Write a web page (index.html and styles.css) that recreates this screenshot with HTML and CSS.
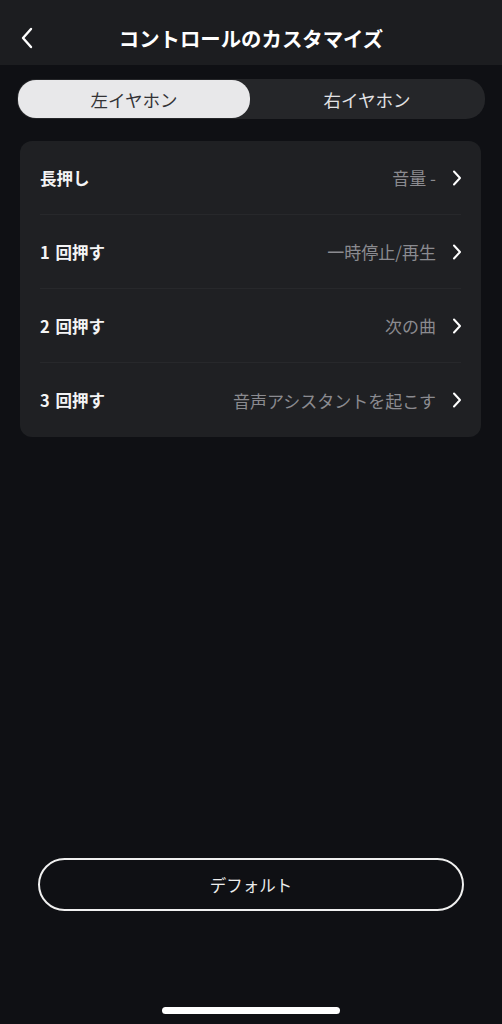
FILE: index.html
```html
<!DOCTYPE html>
<html lang="ja">
<head>
    <meta charset="UTF-8">
    <meta name="viewport" content="width=device-width, initial-scale=1.0">
    <title>コントロールのカスタマイズ</title>
    <link rel="stylesheet" href="styles.css">
</head>
<body>
    <div class="screen">
        <div class="header">
            <a href="#" class="back-btn">
                <svg width="14" height="22" viewBox="0 0 14 22">
                    <path d="M11 2 L3 11 L11 20" fill="none" stroke="#fff" stroke-width="2.4" stroke-linecap="round" stroke-linejoin="round"/>
                </svg>
            </a>
            <div class="header-title">コントロールのカスタマイズ</div>
        </div>

        <div class="segment">
            <div class="segment-item active">左イヤホン</div>
            <div class="segment-item">右イヤホン</div>
        </div>

        <div class="settings-card">
            <div class="setting-row">
                <span class="setting-label">長押し</span>
                <span class="setting-value">音量 -</span>
                <svg class="chevron" width="10" height="16" viewBox="0 0 10 16">
                    <path d="M2 1.5 L8 8 L2 14.5" fill="none" stroke="#fff" stroke-width="2" stroke-linecap="round" stroke-linejoin="round"/>
                </svg>
            </div>
            <div class="setting-row">
                <span class="setting-label">1 回押す</span>
                <span class="setting-value">一時停止/再生</span>
                <svg class="chevron" width="10" height="16" viewBox="0 0 10 16">
                    <path d="M2 1.5 L8 8 L2 14.5" fill="none" stroke="#fff" stroke-width="2" stroke-linecap="round" stroke-linejoin="round"/>
                </svg>
            </div>
            <div class="setting-row">
                <span class="setting-label">2 回押す</span>
                <span class="setting-value">次の曲</span>
                <svg class="chevron" width="10" height="16" viewBox="0 0 10 16">
                    <path d="M2 1.5 L8 8 L2 14.5" fill="none" stroke="#fff" stroke-width="2" stroke-linecap="round" stroke-linejoin="round"/>
                </svg>
            </div>
            <div class="setting-row">
                <span class="setting-label">3 回押す</span>
                <span class="setting-value">音声アシスタントを起こす</span>
                <svg class="chevron" width="10" height="16" viewBox="0 0 10 16">
                    <path d="M2 1.5 L8 8 L2 14.5" fill="none" stroke="#fff" stroke-width="2" stroke-linecap="round" stroke-linejoin="round"/>
                </svg>
            </div>
        </div>

        <div class="spacer"></div>

        <button class="default-btn">デフォルト</button>

        <div class="home-indicator"></div>
    </div>
</body>
</html>
```

FILE: styles.css
```css
body {
    margin: 0;
    background-color: #0f1014;
    font-family: "Noto Sans CJK JP", "Noto Sans", sans-serif;
    color: #fff;
}

.screen {
    width: 502px;
    height: 1024px;
    display: flex;
    flex-direction: column;
    box-sizing: border-box;
}

.header {
    height: 65px;
    background-color: #1c1d20;
    display: flex;
    align-items: center;
    justify-content: center;
    position: relative;
    flex-shrink: 0;
}

.back-btn {
    position: absolute;
    left: 20px;
    top: 27px;
    display: block;
    line-height: 0;
}

.header-title {
    font-size: 20.4px;
    font-weight: bold;
    margin-top: 10px;
}

.segment {
    margin: 14px 17px 0 17px;
    height: 38px;
    background-color: #252629;
    border-radius: 19px;
    display: flex;
    padding: 1px;
}

.segment-item {
    flex: 1;
    display: flex;
    align-items: center;
    justify-content: center;
    font-size: 17.5px;
    color: #e2e2e4;
    border-radius: 18px;
}

.segment-item.active {
    background-color: #e8e8ea;
    color: #333336;
    flex: 0 0 232px;
}

.settings-card {
    margin: 22px 21px 0 20px;
    background-color: #1f2023;
    border-radius: 12px;
    padding: 0 20px;
}

.setting-row {
    height: 74px;
    box-sizing: border-box;
    display: flex;
    align-items: center;
    border-bottom: 1px solid #27282b;
}

.setting-row:last-child {
    border-bottom: none;
}

.setting-label {
    font-size: 16.5px;
    font-weight: bold;
    color: #f4f4f5;
    word-spacing: 2px;
    flex: 1;
}

.setting-value {
    font-size: 17px;
    color: #8b8b90;
    margin-right: 16px;
}

.chevron {
    flex-shrink: 0;
    margin-right: -1px;
}

.spacer {
    flex: 1;
}

.default-btn {
    margin: 0 38px;
    height: 53px;
    border: 2px solid #f0f0f0;
    border-radius: 27px;
    background-color: transparent;
    color: #ececec;
    font-family: "Noto Sans CJK JP", "Noto Sans", sans-serif;
    font-size: 16.5px;
    flex-shrink: 0;
}

.home-indicator {
    width: 178px;
    height: 7px;
    background-color: #fff;
    border-radius: 4px;
    margin: 96px auto 10px auto;
    flex-shrink: 0;
}
```
